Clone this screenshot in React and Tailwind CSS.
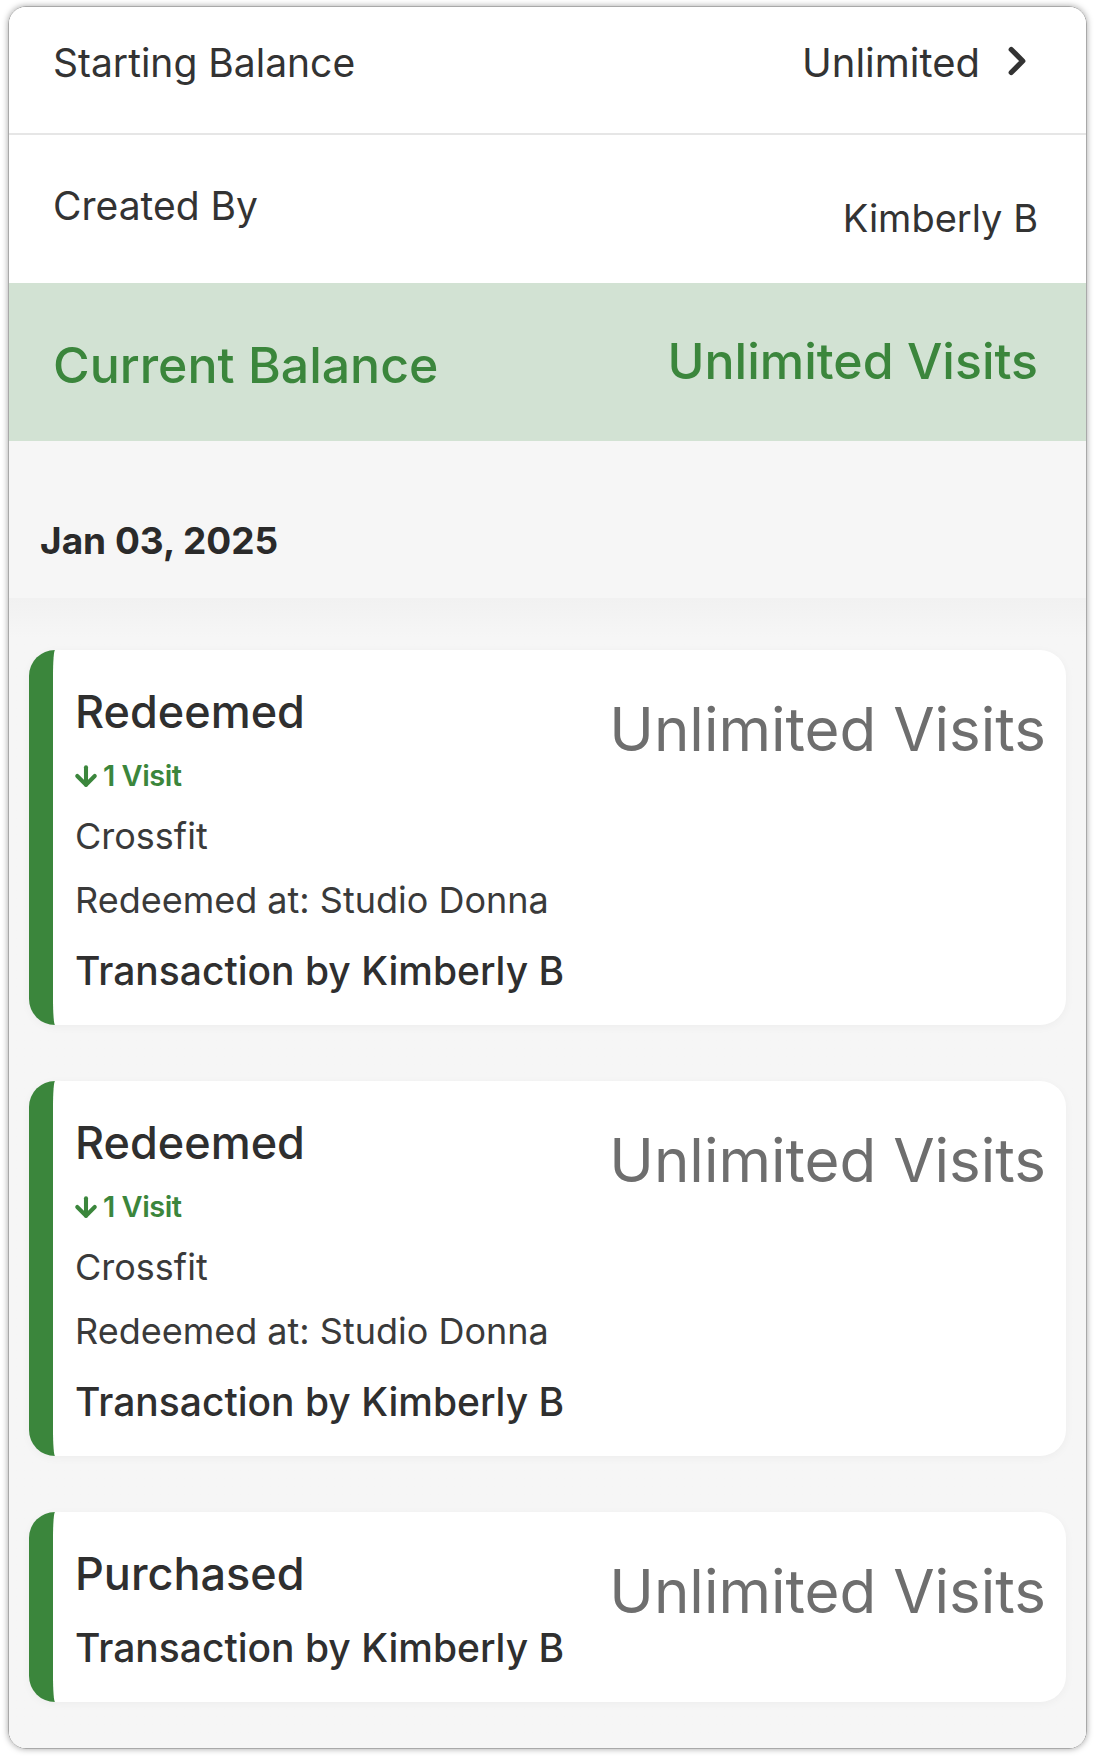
import { ChevronRight, ArrowDown } from "lucide-react";

const transactions = [
  {
    id: 1,
    type: "Redeemed",
    change: "1 Visit",
    service: "Crossfit",
    location: "Studio Donna",
    by: "Kimberly B",
  },
  {
    id: 2,
    type: "Redeemed",
    change: "1 Visit",
    service: "Crossfit",
    location: "Studio Donna",
    by: "Kimberly B",
  },
  { id: 3, type: "Purchased", by: "Kimberly B" },
];

function TransactionCard({ tx }) {
  return (
    <div className="flex justify-between rounded-[26px] border-l-[24px] border-[#3b863c] bg-white pl-[22px] pr-[20px] pt-[34px] pb-[30px] shadow-[0_2px_10px_rgba(0,0,0,0.04)]">
      <div className="flex flex-col">
        <h3 className="text-[45px] font-medium leading-[56px] text-[#2f2f2f]">
          {tx.type}
        </h3>
        {tx.change && (
          <div className="mt-[16px] flex items-center gap-[2px] text-[29px] font-semibold leading-[40px] text-[#3b863c]">
            <ArrowDown size={30} strokeWidth={3.25} className="-ml-[4px]" />
            <span className="tracking-[-0.5px]">{tx.change}</span>
          </div>
        )}
        {tx.service && (
          <p className="mt-[18px] text-[36px] leading-[44px] text-[#3a3a3a]">
            {tx.service}
          </p>
        )}
        {tx.location && (
          <p className="mt-[20px] text-[36px] leading-[44px] text-[#3a3a3a]">
            Redeemed at: {tx.location}
          </p>
        )}
        <p
          className={
            tx.change
              ? "mt-[25px] text-[39px] font-medium leading-[48px] text-[#2f2f2f]"
              : "mt-[22px] text-[39px] font-medium leading-[48px] text-[#2f2f2f]"
          }
        >
          Transaction by {tx.by}
        </p>
      </div>
      <p className="mt-[11px] text-[60px] leading-[68px] text-[#6e6e6e]">
        Unlimited Visits
      </p>
    </div>
  );
}

export default function App() {
  return (
    <div className="min-h-screen bg-white pt-[6px] pb-[7px] px-[8px] font-['Inter','Noto_Sans',sans-serif]">
      <div className="overflow-hidden rounded-[18px] border border-[#a9a9a9] shadow-[0_0_6px_rgba(0,0,0,0.35)]">
        <div className="flex items-center justify-between border-b-2 border-[#e6e6e6] bg-white h-[128px] pl-[44px] pr-[46px] pb-[14px]">
          <span className="text-[39px] text-[#333]">Starting Balance</span>
          <div className="flex items-center gap-[14px] text-[#333]">
            <span className="text-[40px]">Unlimited</span>
            <ChevronRight size={46} strokeWidth={2.75} className="-mt-1" />
          </div>
        </div>
        <div className="flex justify-between bg-white h-[148px] pl-[44px] pr-[48px] pt-[47px]">
          <span className="text-[39px] leading-[48px] text-[#333]">Created By</span>
          <span className="mt-[12px] text-[38px] leading-[48px] text-[#333]">Kimberly B</span>
        </div>
        <div className="flex items-center justify-between bg-[#d2e2d3] h-[158px] pl-[44px] pr-[48px]">
          <span className="mt-[6px] text-[50px] font-medium text-[#3b863c]">
            Current Balance
          </span>
          <span className="-mt-[2px] text-[50px] font-medium text-[#3b863c]">
            Unlimited Visits
          </span>
        </div>
        <div className="bg-[#f6f6f6]">
          <div className="h-[157px] pl-[31px] pt-[78px]">
            <h2 className="text-[37px] font-bold leading-[44px] text-[#2a2a2a]">
              Jan 03, 2025
            </h2>
          </div>
          <div className="flex flex-col gap-[56px] bg-gradient-to-b from-[#f1f1f1] to-[#f6f6f6] to-[40px] px-[20px] pt-[52px] pb-[46px]">
            {transactions.map((tx) => (
              <TransactionCard key={tx.id} tx={tx} />
            ))}
          </div>
        </div>
      </div>
    </div>
  );
}
